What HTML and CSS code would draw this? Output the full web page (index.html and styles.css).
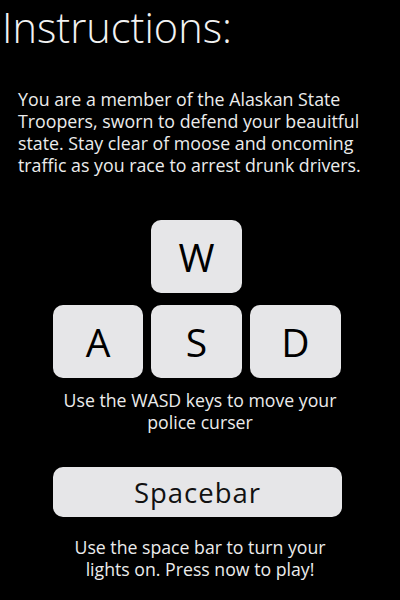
FILE: index.html
```html
<!DOCTYPE html>
<html>
<head>
<meta charset="utf-8">
<link rel="stylesheet" href="styles.css">
</head>
<body>
<div class="screen">
  <h1 class="title">Instructions:</h1>
  <p class="intro">You are a member of the Alaskan State Troopers, sworn to defend your beauitful state. Stay clear of moose and oncoming traffic as you race to arrest drunk drivers.</p>
  <div class="keys">
    <div class="key key-w">W</div>
    <div class="key key-a">A</div>
    <div class="key key-s">S</div>
    <div class="key key-d">D</div>
  </div>
  <p class="caption caption-wasd">Use the WASD keys to move your<br>police curser</p>
  <div class="spacebar">Spacebar</div>
  <p class="caption caption-space">Use the space bar to turn your<br>lights on. Press now to play!</p>
</div>
</body>
</html>
```
FILE: styles.css
```css
html, body {
  margin: 0;
  padding: 0;
  background: #000;
}
.screen {
  width: 400px;
  height: 600px;
  background: #000;
  color: #ececec;
  font-family: "Open Sans", "DejaVu Sans", sans-serif;
  display: flex;
  flex-direction: column;
}
.title {
  margin: 0;
  padding: 0 0 0 2px;
  font-weight: 300;
  font-size: 41.5px;
  line-height: 54px;
  color: #f2f2f2;
}
.intro {
  margin: 34px 0 0 0;
  padding: 0 18px;
  font-size: 17.8px;
  line-height: 22px;
}
.keys {
  margin: 44px 0 0 53px;
  display: grid;
  grid-template-columns: 90px 91px 91px;
  grid-template-rows: 73px 73px;
  column-gap: 8px;
  row-gap: 12px;
}
.key {
  background: #e6e6e8;
  border-radius: 10px;
  color: #000;
  font-size: 39px;
  display: flex;
  align-items: center;
  justify-content: center;
}
.key-w { grid-column: 2; grid-row: 1; }
.key-a { grid-column: 1; grid-row: 2; }
.key-s { grid-column: 2; grid-row: 2; }
.key-d { grid-column: 3; grid-row: 2; }
.caption {
  margin: 0;
  text-align: center;
  font-size: 17.7px;
  line-height: 22px;
}
.caption-wasd {
  margin-top: 11px;
}
.spacebar {
  margin: 34px 0 0 53px;
  width: 289px;
  height: 50px;
  background: #e6e6e8;
  border-radius: 10px;
  color: #111;
  font-size: 27.5px;
  letter-spacing: 1px;
  display: flex;
  align-items: center;
  justify-content: center;
}
.caption-space {
  margin-top: 19px;
}
```
